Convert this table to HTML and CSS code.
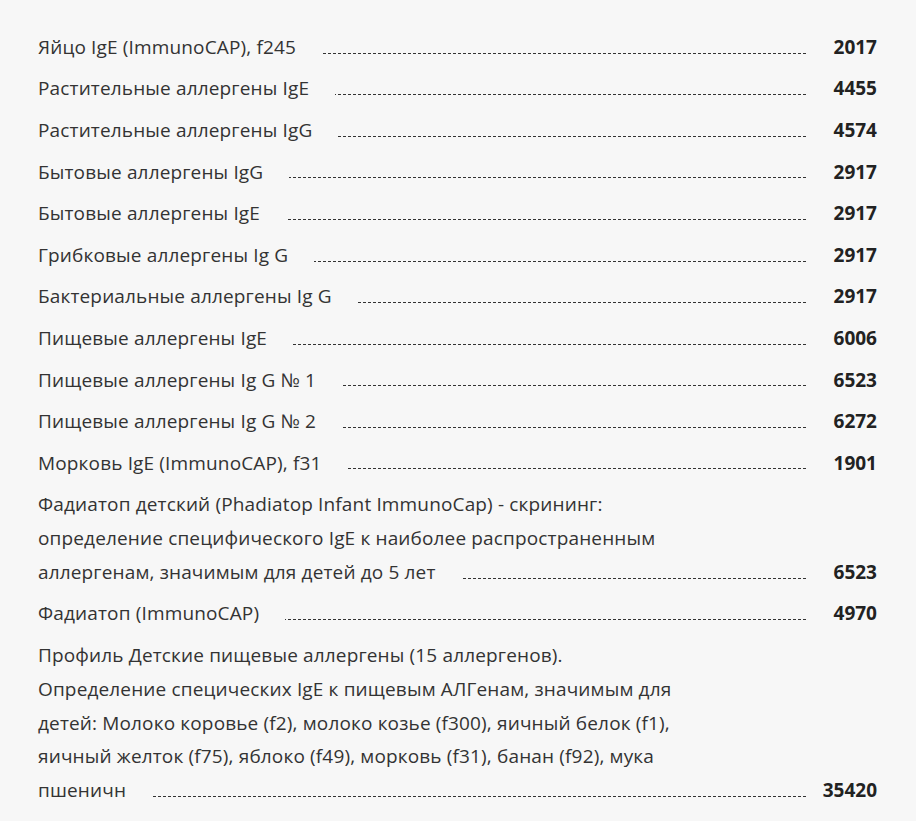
FILE: index.html
```html
<!DOCTYPE html>
<html lang="ru">
<head>
<meta charset="utf-8">
<title>Цены</title>
<link rel="stylesheet" href="styles.css">
</head>
<body>
<div class="list">
  <div class="row"><div class="name"><span>Яйцо IgE (ImmunoCAP), f245</span></div><div class="price">2017</div></div>
  <div class="row"><div class="name"><span>Растительные аллергены IgE</span></div><div class="price">4455</div></div>
  <div class="row"><div class="name"><span>Растительные аллергены IgG</span></div><div class="price">4574</div></div>
  <div class="row"><div class="name"><span>Бытовые аллергены IgG</span></div><div class="price">2917</div></div>
  <div class="row"><div class="name"><span>Бытовые аллергены IgE</span></div><div class="price">2917</div></div>
  <div class="row"><div class="name"><span>Грибковые аллергены Ig G</span></div><div class="price">2917</div></div>
  <div class="row"><div class="name"><span>Бактериальные аллергены Ig G</span></div><div class="price">2917</div></div>
  <div class="row"><div class="name"><span>Пищевые аллергены IgE</span></div><div class="price">6006</div></div>
  <div class="row"><div class="name"><span>Пищевые аллергены Ig G № 1</span></div><div class="price">6523</div></div>
  <div class="row"><div class="name"><span>Пищевые аллергены Ig G № 2</span></div><div class="price">6272</div></div>
  <div class="row"><div class="name"><span>Морковь IgE (ImmunoCAP), f31</span></div><div class="price">1901</div></div>
  <div class="row"><div class="name"><span>Фадиатоп детский (Phadiatop Infant ImmunoCap) - скрининг: определение специфического IgE к наиболее распространенным аллергенам, значимым для детей до 5 лет</span></div><div class="price">6523</div></div>
  <div class="row"><div class="name"><span>Фадиатоп (ImmunoCAP)</span></div><div class="price">4970</div></div>
  <div class="row"><div class="name"><span>Профиль Детские пищевые аллергены (15 аллергенов).<br>Определение спецических IgE к пищевым АЛГенам, значимым для детей: Молоко коровье (f2), молоко козье (f300), яичный белок (f1), яичный желток (f75), яблоко (f49), морковь (f31), банан (f92), мука пшеничн</span></div><div class="price">35420</div></div>
</div>
</body>
</html>
```

FILE: styles.css
```css
html, body {
  margin: 0;
  padding: 0;
  background: #f7f7f7;
}
body {
  font-family: "Open Sans", "Noto Sans", sans-serif;
  font-size: 19px;
  color: #333;
}
.list {
  padding: 27px 39px 0 38px;
}
.row {
  display: flex;
  align-items: flex-end;
  padding: 3.9px 0;
  line-height: 33.8px;
}
.name {
  flex: 1;
  padding-right: 101px;
  letter-spacing: 0.15px;
  background-image: repeating-linear-gradient(to right, #333 0 3px, transparent 3px 5px);
  background-repeat: no-repeat;
  background-size: 100% 1px;
  background-position: 0 calc(100% - 11px);
}
.name span {
  background: #f7f7f7;
  padding-right: 26px;
}
.price {
  flex: none;
  width: 71px;
  text-align: right;
  font-weight: 700;
  color: #222;
}
```
